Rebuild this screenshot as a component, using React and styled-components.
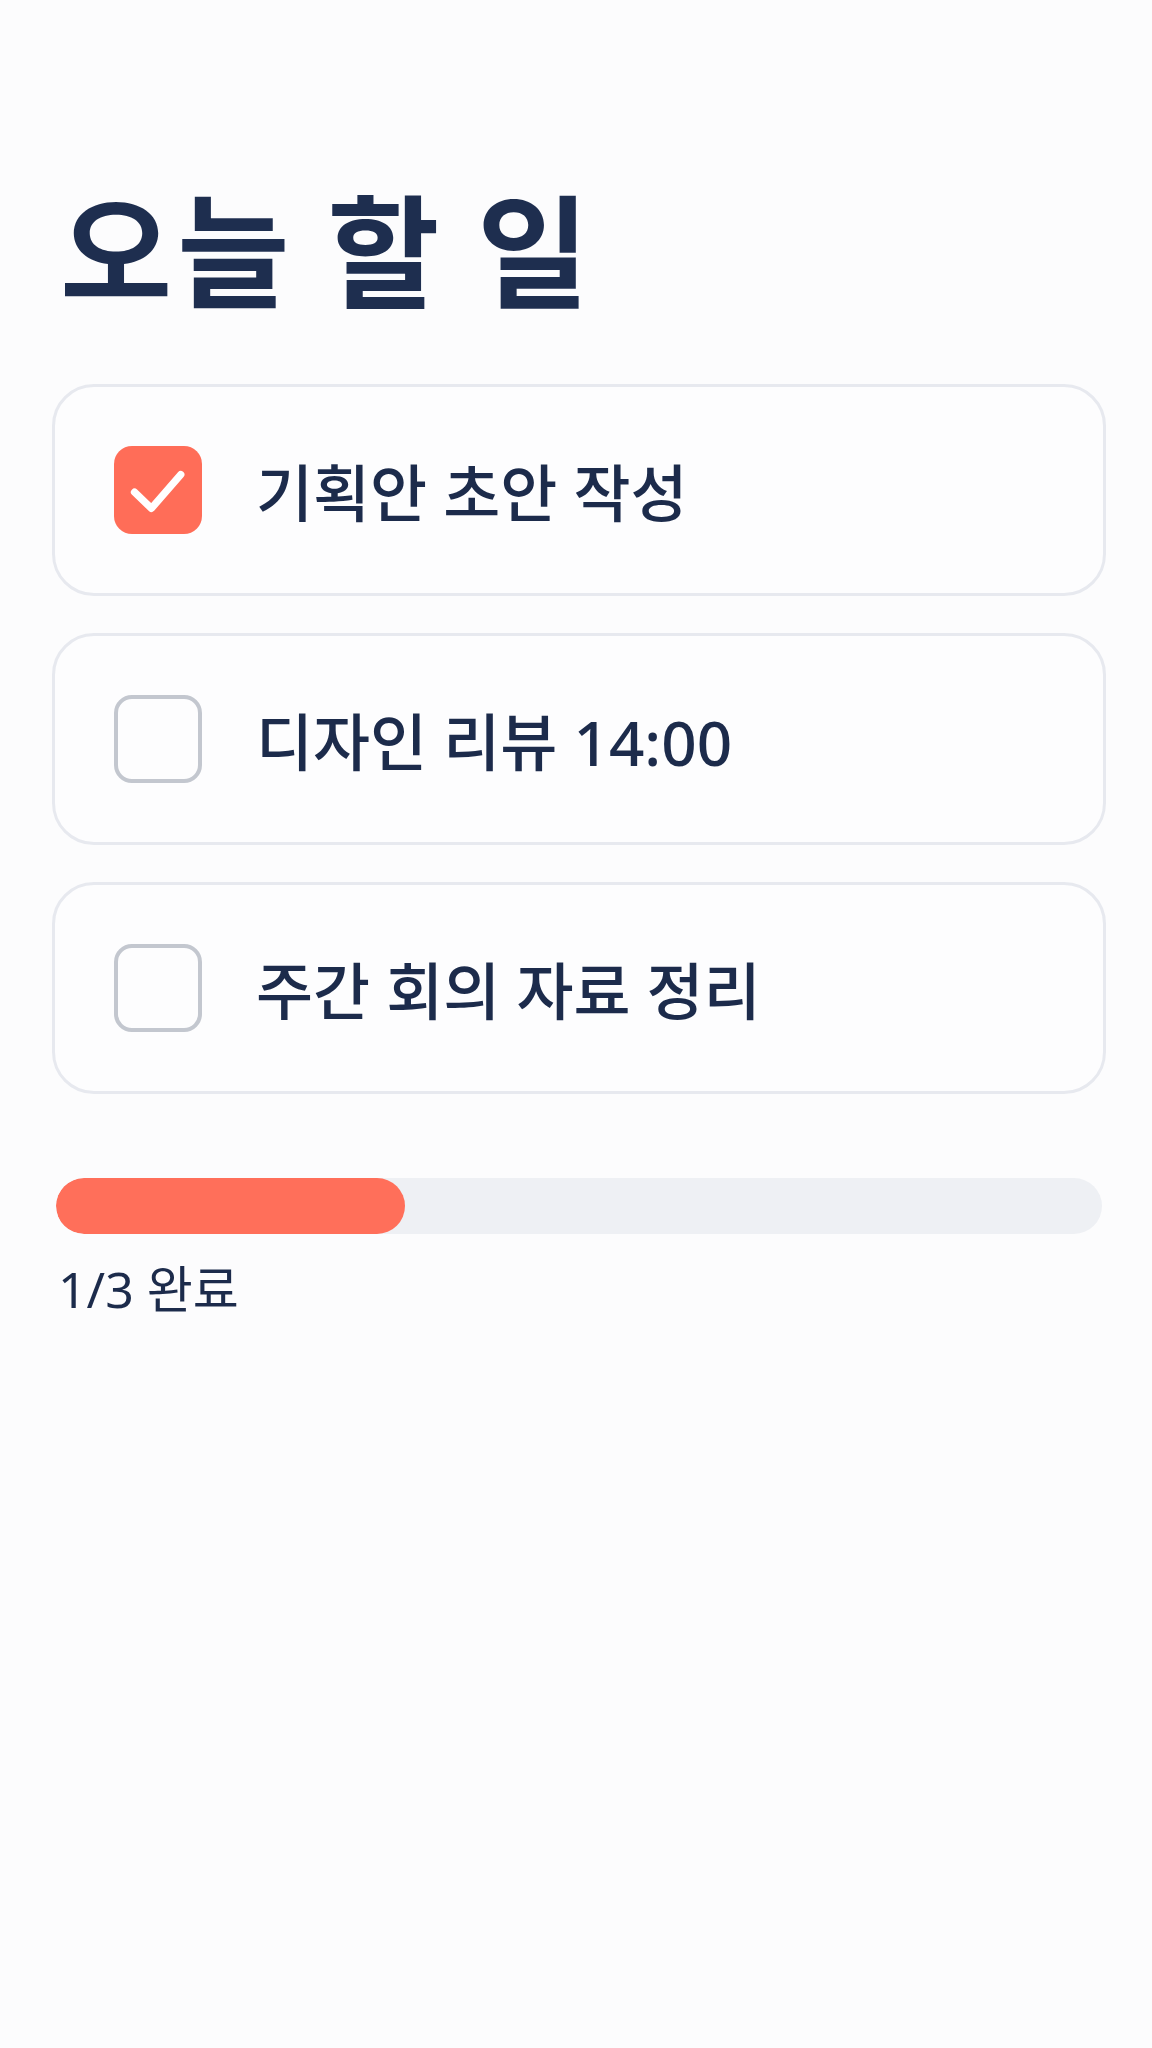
import React from "react";
import styled, { createGlobalStyle } from "styled-components";

const GlobalStyle = createGlobalStyle`
  body {
    margin: 0;
    background: #fcfcfd;
    font-family: "Noto Sans", "Noto Sans CJK KR", sans-serif;
    color: #1c2b4b;
  }
`;

const Page = styled.div`
  padding: 172px 46px 0 52px;
  display: flex;
  flex-direction: column;
`;

const Title = styled.h1`
  margin: 0 0 66px 8px;
  font-family: "Noto Sans CJK KR", sans-serif;
  font-size: 122px;
  line-height: 1.2;
  font-weight: 700;
  color: #1e2e4f;
  letter-spacing: 5px;
`;

const List = styled.div`
  display: flex;
  flex-direction: column;
  gap: 37px;
`;

const Card = styled.div`
  height: 212px;
  box-sizing: border-box;
  border: 3px solid #e7e9ef;
  border-radius: 42px;
  background: #fdfdfe;
  display: flex;
  align-items: center;
  padding-left: 59px;
  gap: 54px;
`;

const Box = styled.div`
  width: 88px;
  height: 88px;
  box-sizing: border-box;
  border-radius: 18px;
  flex-shrink: 0;
  display: flex;
  align-items: center;
  justify-content: center;
  background: ${(p) => (p.$done ? "#ff6d58" : "transparent")};
  border: ${(p) => (p.$done ? "none" : "4px solid #c3c7cf")};
`;

const Label = styled.span`
  font-size: 62px;
  font-weight: 500;
  color: #1c2b4b;
`;

const Track = styled.div`
  margin: 84px 4px 0 4px;
  height: 56px;
  border-radius: 28px;
  background: #eef0f4;
  overflow: hidden;
`;

const Fill = styled.div`
  height: 100%;
  border-radius: 28px;
  background: #ff6f5a;
`;

const Count = styled.div`
  margin: 16px 0 0 6px;
  font-size: 50px;
  font-weight: 400;
  color: #1c2b4b;
`;

const Check = () => (
  <svg width="88" height="88" viewBox="0 0 24 24" fill="none">
    <path
      d="M5.6 12.6 L10.2 17 L18.2 7.8"
      stroke="#fff"
      strokeWidth="2"
      strokeLinecap="round"
      strokeLinejoin="round"
    />
  </svg>
);

const tasks = [
  { text: "기획안 초안 작성", done: true },
  { text: "디자인 리뷰 14:00", done: false },
  { text: "주간 회의 자료 정리", done: false },
];

export default function App() {
  const done = tasks.filter((t) => t.done).length;
  return (
    <>
      <GlobalStyle />
      <Page>
        <Title>오늘 할 일</Title>
        <List>
          {tasks.map((t) => (
            <Card key={t.text}>
              <Box $done={t.done}>{t.done && <Check />}</Box>
              <Label>{t.text}</Label>
            </Card>
          ))}
        </List>
        <Track>
          <Fill style={{ width: `${(done / tasks.length) * 100}%` }} />
        </Track>
        <Count>
          {done}/{tasks.length} 완료
        </Count>
      </Page>
    </>
  );
}
